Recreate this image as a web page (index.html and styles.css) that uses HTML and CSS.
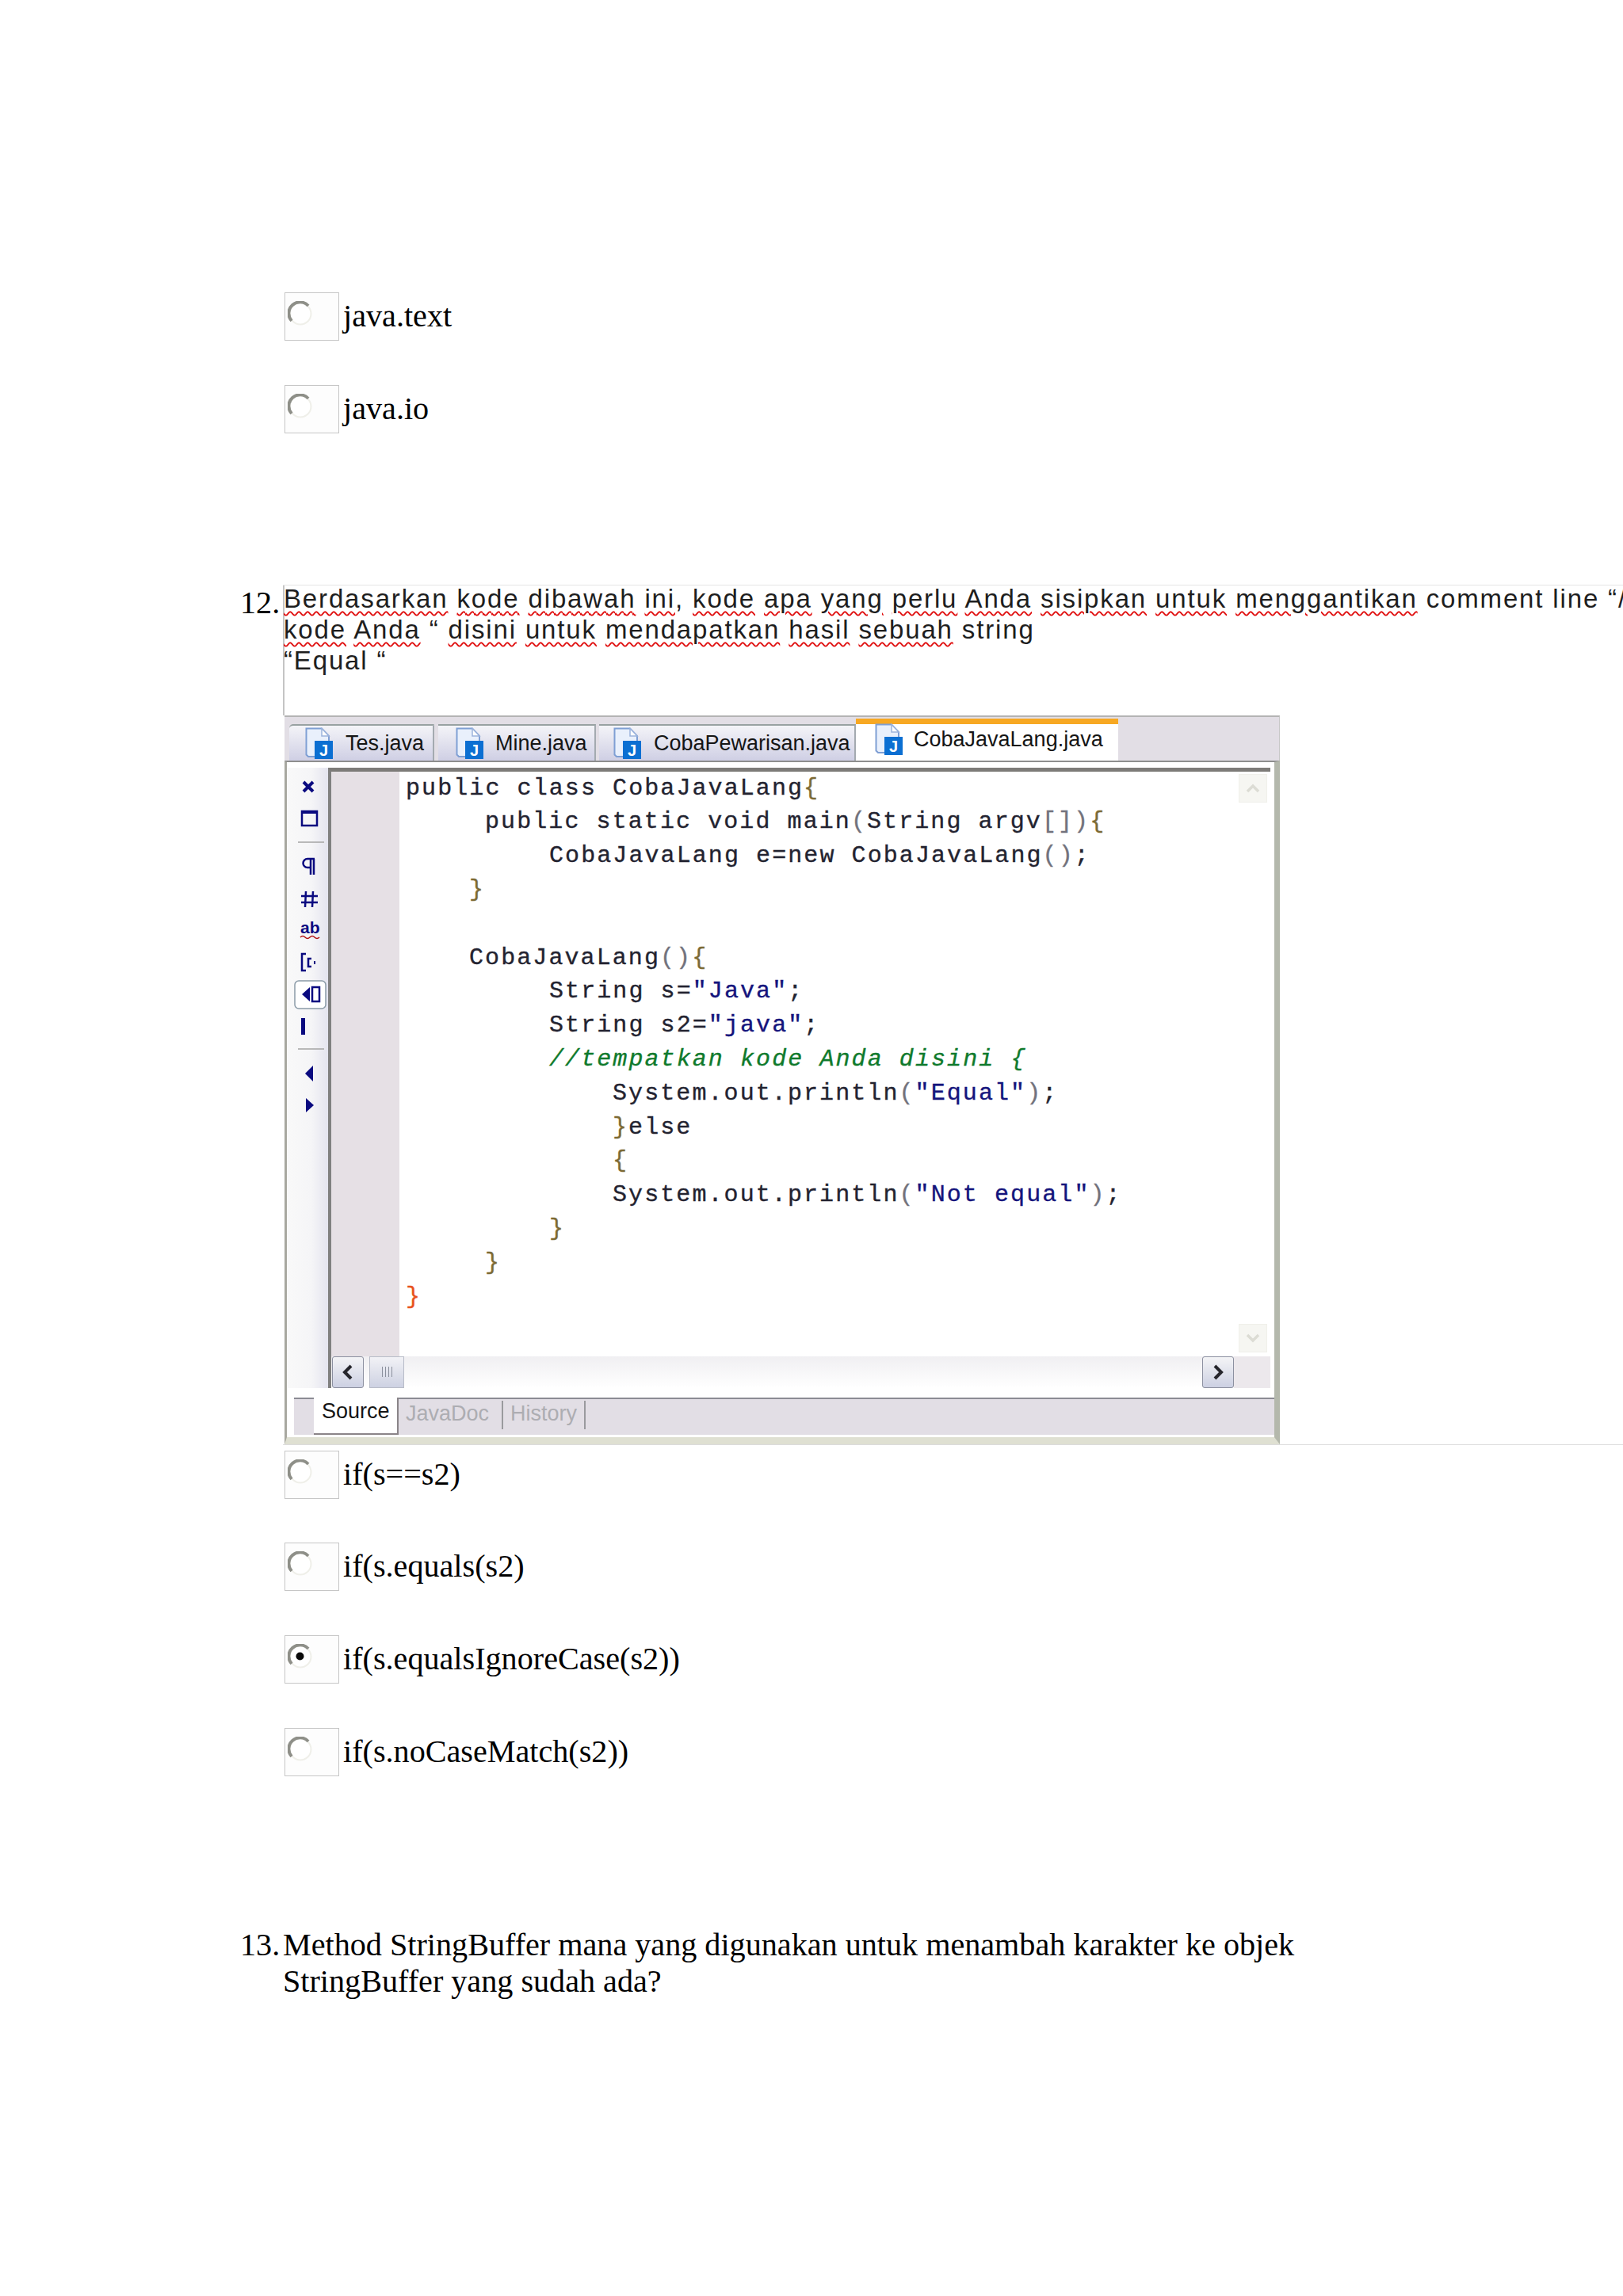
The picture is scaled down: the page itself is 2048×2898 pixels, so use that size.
FILE: index.html
```html
<!DOCTYPE html>
<html lang="id">
<head>
<meta charset="utf-8">
<title>Soal Java</title>
<link rel="stylesheet" href="styles.css">
</head>
<body>
<svg class="defs" width="0" height="0" aria-hidden="true">
  <symbol id="radio" viewBox="0 0 32 32">
    <circle cx="16" cy="16" r="13.5" fill="#fff" stroke="#efefe9" stroke-width="2"/>
    <path d="M5 25 A14 14 0 0 1 26 6" fill="none" stroke="#8e8f88" stroke-width="4"/>
  </symbol>
  <symbol id="radio-on" viewBox="0 0 32 32">
    <circle cx="16" cy="16" r="13.5" fill="#fff" stroke="#efefe9" stroke-width="2"/>
    <path d="M5 25 A14 14 0 0 1 26 6" fill="none" stroke="#8e8f88" stroke-width="4"/>
    <circle cx="15.500" cy="15.500" r="5" fill="#0a0a0a"/>
  </symbol>
  <symbol id="jfile" viewBox="0 0 36 40">
    <path d="M1.500 1.500H21L30 11V37H4L1.500 34.500Z" fill="#e9f0fc" stroke="#7f9fd4" stroke-width="2"/>
    <path d="M21 1.500V11H30Z" fill="#fff" stroke="#9db4dc" stroke-width="1.500"/>
    <rect x="12" y="17" width="23" height="23" fill="#0b6fd2"/>
  </symbol>
</svg>

<main class="page">
  <ul class="options options-top">
    <li class="option"><span class="radio-box"><svg class="radio"><use href="#radio"/></svg></span><span>java.text</span></li>
    <li class="option"><span class="radio-box"><svg class="radio"><use href="#radio"/></svg></span><span>java.io</span></li>
  </ul>

  <section class="question q12">
    <div class="qnum">12.</div>
    <div class="qbody">
      <div class="shot">
        <div class="shot-text">
          <div class="shot-line"><span class="sp">Berdasarkan</span> <span class="sp">kode</span> <span class="sp">dibawah</span> <span class="sp">ini</span>, <span class="sp">kode</span> <span class="sp">apa</span> <span class="sp">yang</span> <span class="sp">perlu</span> <span class="sp">Anda</span> <span class="sp">sisipkan</span> <span class="sp">untuk</span> <span class="sp">menggantikan</span> comment line “/</div>
          <div class="shot-line"><span class="sp">kode</span> <span class="sp">Anda</span> “ <span class="sp">disini</span> <span class="sp">untuk</span> <span class="sp">mendapatkan</span> <span class="sp">hasil</span> <span class="sp">sebuah</span> string</div>
          <div class="shot-line">“Equal “</div>
        </div>

        <div class="ide">
          <div class="ide-tabs">
            <div class="tab tab-1"><svg class="jicon" viewBox="0 0 36 40"><use href="#jfile"/><text class="jglyph" x="23.500" y="35.500" text-anchor="middle">J</text></svg>Tes.java</div>
            <div class="tab tab-2"><svg class="jicon" viewBox="0 0 36 40"><use href="#jfile"/><text class="jglyph" x="23.500" y="35.500" text-anchor="middle">J</text></svg>Mine.java</div>
            <div class="tab tab-3"><svg class="jicon" viewBox="0 0 36 40"><use href="#jfile"/><text class="jglyph" x="23.500" y="35.500" text-anchor="middle">J</text></svg>CobaPewarisan.java</div>
            <div class="tab tab-active"><svg class="jicon" viewBox="0 0 36 40"><use href="#jfile"/><text class="jglyph" x="23.500" y="35.500" text-anchor="middle">J</text></svg>CobaJavaLang.java</div>
          </div>
          <div class="ide-frame">
            <div class="ide-work">
              <div class="toolbar">
                <svg class="toolbar-icons" viewBox="361 969 52 450" width="52" height="450">
                  <path d="M382 987L394 999M394 987L382 999" stroke="#0a0a80" stroke-width="4" fill="none"/>
                  <rect x="380" y="1024" width="19" height="18" fill="none" stroke="#0a0a80" stroke-width="2.500"/>
                  <path d="M380 1025H399" stroke="#0a0a80" stroke-width="4"/>
                  <path d="M375 1063H408" stroke="#a5a5a5" stroke-width="1.500"/>
                  <path d="M387 1084H396M391 1084V1104M395 1084V1104M387 1084A5 5 0 0 0 387 1095H391" stroke="#0a0a80" stroke-width="2.500" fill="none"/>
                  <path d="M385 1125L384 1145M394 1125L393 1145M379 1131H400M379 1139H400" stroke="#0a0a80" stroke-width="2.500" fill="none"/>
                  <text class="tool-ab" x="378" y="1178">ab</text>
                  <path d="M378 1183Q381 1180 384 1183T390 1183T396 1183T402 1183" stroke="#b01010" stroke-width="1.500" fill="none"/>
                  <path d="M385 1204H380V1225H385M392 1210H388V1220H392" stroke="#0a0a80" stroke-width="2.500" fill="none"/>
                  <rect x="395" y="1213" width="2" height="4" fill="#0a0a80"/>
                  <rect x="371" y="1238" width="39" height="35" rx="5" fill="#fff" stroke="#8a9aa6" stroke-width="1.500"/>
                  <path d="M380 1255L390 1246V1264Z" fill="#0a0a80"/>
                  <rect x="393" y="1246" width="9" height="18" fill="#fff" stroke="#0a0a80" stroke-width="2.500"/>
                  <rect x="379" y="1285" width="5" height="21" fill="#0a0a80"/>
                  <path d="M375 1324H408" stroke="#a5a5a5" stroke-width="1.500"/>
                  <path d="M384 1355L394 1345V1365Z" fill="#0a0a80"/>
                  <path d="M395 1395L385 1386V1404Z" fill="#0a0a80"/>
                </svg>
              </div>
              <div class="editor">
                <div class="gutter"></div>
                <div class="code">
                  <div class="ln">public class CobaJavaLang<span class="br">{</span></div>
                  <div class="ln i5">public static void main<span class="pn">(</span>String argv<span class="pn">[])</span><span class="br">{</span></div>
                  <div class="ln i9">CobaJavaLang e=new CobaJavaLang<span class="pn">()</span>;</div>
                  <div class="ln i4"><span class="br">}</span></div>
                  <div class="ln ln-blank"></div>
                  <div class="ln i4">CobaJavaLang<span class="pn">()</span><span class="br">{</span></div>
                  <div class="ln i9">String s=<span class="st">"Java"</span>;</div>
                  <div class="ln i9">String s2=<span class="st">"java"</span>;</div>
                  <div class="ln i9"><span class="cm">//tempatkan kode Anda disini {</span></div>
                  <div class="ln i13">System.out.println<span class="pn">(</span><span class="st">"Equal"</span><span class="pn">)</span>;</div>
                  <div class="ln i13"><span class="br">}</span>else</div>
                  <div class="ln i13"><span class="br">{</span></div>
                  <div class="ln i13">System.out.println<span class="pn">(</span><span class="st">"Not equal"</span><span class="pn">)</span>;</div>
                  <div class="ln i9"><span class="br">}</span></div>
                  <div class="ln i5"><span class="br">}</span></div>
                  <div class="ln"><span class="end">}</span></div>
                </div>
                <div class="vscroll">
                  <div class="vbtn"><svg class="vchev" viewBox="0 0 20 12"><path d="M3 10L10 3L17 10" fill="none" stroke="#dcdcd4" stroke-width="3.500"/></svg></div>
                  <div class="vbtn"><svg class="vchev" viewBox="0 0 20 12"><path d="M3 2L10 9L17 2" fill="none" stroke="#dcdcd4" stroke-width="3.500"/></svg></div>
                </div>
                <div class="hscroll">
                  <div class="hbtn hbtn-left"><svg class="hchev" viewBox="0 0 16 20"><path d="M12 2L4 10L12 18" fill="none" stroke="#26262c" stroke-width="4"/></svg></div>
                  <div class="hthumb"><span class="grip"></span><span class="grip"></span><span class="grip"></span><span class="grip"></span></div>
                  <div class="htrack"></div>
                  <div class="hbtn"><svg class="hchev" viewBox="0 0 16 20"><path d="M4 2L12 10L4 18" fill="none" stroke="#26262c" stroke-width="4"/></svg></div>
                  <div class="hcorner"></div>
                </div>
              </div>
            </div>
            <div class="ide-views">
              <div class="view view-on">Source</div>
              <div class="view view-off view-javadoc">JavaDoc</div>
              <div class="view view-off view-history">History</div>
            </div>
          </div>
        </div>
      </div>

      <ul class="options options-q">
        <li class="option"><span class="radio-box"><svg class="radio"><use href="#radio"/></svg></span><span>if(s==s2)</span></li>
        <li class="option"><span class="radio-box"><svg class="radio"><use href="#radio"/></svg></span><span>if(s.equals(s2)</span></li>
        <li class="option"><span class="radio-box"><svg class="radio"><use href="#radio-on"/></svg></span><span>if(s.equalsIgnoreCase(s2))</span></li>
        <li class="option"><span class="radio-box"><svg class="radio"><use href="#radio"/></svg></span><span>if(s.noCaseMatch(s2))</span></li>
      </ul>
    </div>
  </section>

  <section class="question q13">
    <div class="qnum">13.</div>
    <div class="qbody">
      <p class="qtext">Method StringBuffer mana yang digunakan untuk menambah karakter ke objek<br>StringBuffer yang sudah ada?</p>
    </div>
  </section>
</main>
</body>
</html>
```

FILE: styles.css
```css
html, body {
  margin: 0;
  padding: 0;
  background: #fff;
}
body {
  height: 2898px;
  overflow: hidden;
  color: #000;
  font-family: "Liberation Serif", "Times New Roman", serif;
  font-size: 40.16px;
  line-height: 46px;
}
.defs { position: absolute; }
.jglyph {
  font: bold 20px "Liberation Sans", Arial, sans-serif;
  fill: #fff;
}
.page {
  padding: 369px 0 0 303px;
  width: 1745px;
}

/* options */
.options {
  list-style: none;
  margin: 0;
  padding: 0;
  display: flex;
  flex-direction: column;
  gap: 55.7px;
}
.options-top { margin-left: 56px; }
.options-q { margin: 7px 0 0 2px; }
.option {
  display: flex;
  gap: 5px;
  height: 61px;
  white-space: nowrap;
}
.option > span:last-child { margin-top: 7px; }
.radio-box {
  box-sizing: border-box;
  flex: none;
  width: 69px;
  height: 61px;
  padding: 10px 0 0 3px;
  background: #fdfdfd;
  border: 1px solid #c6c6c6;
}
.radio {
  display: block;
  width: 32px;
  height: 32px;
}

/* questions */
.question { display: flex; }
.qnum {
  flex: none;
  width: 54px;
}
.qbody {
  flex: 1;
  min-width: 0;
  overflow: hidden;
}
.q12 { margin-top: 191px; }
.q13 { margin-top: 190px; }
.qtext { margin: 0; }

/* picture of the question */
.shot {
  border-top: 1px solid #e6e6e6;
  border-bottom: 1px solid #dcdcdc;
}
.shot-text {
  box-sizing: border-box;
  height: 164px;
  border-left: 2px solid #c4c4c4;
  color: #1e1e1e;
  font: 33px/39px "Liberation Sans", Arial, sans-serif;
  letter-spacing: 1.85px;
  white-space: nowrap;
}
.shot-line { margin-left: -1px; }
.shot-line:first-child {
  line-height: 33px;
  margin-bottom: 3px;
}
.sp {
  text-decoration: underline wavy #e01010 2px;
  text-underline-offset: 4px;
}

/* IDE */
.ide {
  box-sizing: border-box;
  width: 1256px;
  height: 920px;
  margin-left: 2px;
  display: flex;
  flex-direction: column;
  color: #151515;
  font-family: "Liberation Sans", Arial, sans-serif;
  font-size: 27px;
}
.ide-tabs {
  box-sizing: border-box;
  flex: none;
  height: 57px;
  display: flex;
  align-items: flex-end;
  padding-left: 6px;
  background: #e2dee5;
  border-top: 2px solid #b4b4b4;
  border-right: 1px solid #c8c8c8;
}
.tab {
  box-sizing: border-box;
  display: flex;
  align-items: center;
  height: 46px;
  border-top: 2px solid #98a2a2;
  border-right: 2px solid #a4aab0;
  background: linear-gradient(#f4f4f8, #cfcfe4);
  line-height: 40px;
  white-space: nowrap;
}
.tab-1 { width: 183px; padding-left: 20px; gap: 15px; margin-right: 5px; border-top-left-radius: 5px; }
.tab-2 { width: 199px; padding-left: 22px; gap: 14px; margin-right: 4px; }
.tab-3 { width: 324px; padding-left: 18px; gap: 15px; }
.tab-active {
  width: 331px;
  height: 55px;
  margin-bottom: -2px;
  padding: 0 0 10px 24px;
  gap: 13px;
  background: #fff;
  border: 0;
  border-top: 7px solid #f7a823;
}
.jicon {
  flex: none;
  width: 36px;
  height: 40px;
}
.ide-frame {
  box-sizing: border-box;
  flex: 1;
  min-height: 0;
  display: flex;
  flex-direction: column;
  padding-top: 7px;
  background: #fff;
  border-top: 2px solid #8e8e8e;
  border-left: 3px solid #a8a8a0;
  border-right: 7px solid #b4b8ac;
  border-bottom: 9px solid #dfe0d2;
}
.ide-work {
  flex: none;
  height: 783px;
  display: flex;
  margin-right: 5px;
}
.toolbar {
  flex: none;
  width: 52px;
  background: linear-gradient(90deg, #f9f9f9, #f5f5f7 60%, #e4e4ef);
}
.toolbar-icons { display: block; }
.tool-ab {
  font: bold 21px "Liberation Sans", Arial, sans-serif;
  fill: #0a0a80;
}
.editor {
  flex: 1;
  min-width: 0;
  display: grid;
  grid-template-columns: 86px 1fr 43px;
  grid-template-rows: minmax(0, 1fr) 40px;
  border-top: 5px solid #7d7b78;
  border-left: 4px solid #808080;
}
.gutter { background: #e6e0e5; }
.code {
  padding-left: 8px;
  overflow: hidden;
  background: #fff;
  color: #232330;
  font: 30px/42.8px "Liberation Mono", "Courier New", monospace;
  letter-spacing: 2.08px;
  -webkit-text-stroke: 0.35px currentColor;
}
.ln { white-space: pre; }
.ln-blank { height: 42.8px; }
.i4 { padding-left: 80px; }
.i5 { padding-left: 100px; }
.i9 { padding-left: 181px; }
.i13 { padding-left: 261px; }
.br { color: #7c6a34; }
.pn { color: #72727c; }
.st { color: #14147c; }
.cm { color: #0f7a2c; font-style: italic; }
.end { color: #e8521c; }
.vscroll {
  display: flex;
  flex-direction: column;
  justify-content: space-between;
  padding: 3px 4px 5px 0;
  background: #fff;
}
.vbtn {
  box-sizing: border-box;
  height: 36px;
  margin-left: 3px;
  display: flex;
  align-items: center;
  justify-content: center;
  background: #f6f6f2;
  border: 1px solid #f0f0ea;
}
.vchev { width: 20px; height: 12px; }
.hscroll {
  grid-column: 1 / -1;
  display: flex;
  background: linear-gradient(#f0eff2, #fff);
}
.hbtn {
  box-sizing: border-box;
  flex: none;
  width: 40px;
  display: flex;
  align-items: center;
  justify-content: center;
  background: linear-gradient(#f4f4f6, #ccd0e2);
  border: 1px solid #8c90a0;
  border-radius: 3px;
}
.hbtn-left { margin-left: 1px; }
.hchev { width: 16px; height: 20px; }
.hthumb {
  box-sizing: border-box;
  flex: none;
  width: 44px;
  margin-left: 7px;
  display: flex;
  align-items: center;
  justify-content: center;
  gap: 3px;
  background: linear-gradient(#f2f2f6, #cdd1e2);
  border: 1px solid #b8bcc8;
}
.grip {
  width: 1px;
  height: 13px;
  background: #8a8f9c;
}
.htrack { flex: 1; }
.hcorner {
  flex: none;
  width: 46px;
  background: #ece8ec;
}
.ide-views {
  box-sizing: border-box;
  flex: none;
  height: 47px;
  margin: 12px 0 2px 9px;
  padding-left: 25px;
  display: flex;
  background: #e2dee5;
  border-top: 2px solid #8b8b94;
}
.view { white-space: nowrap; }
.view-on {
  box-sizing: border-box;
  width: 107px;
  height: 47px;
  margin-top: -2px;
  padding-left: 10px;
  line-height: 34px;
  background: #fff;
  border-right: 2px solid #8a8488;
  border-bottom: 2px solid #8a8488;
}
.view-off {
  box-sizing: border-box;
  height: 36px;
  margin-top: 2px;
  line-height: 32px;
  color: #adadb2;
  border-right: 2px solid #9a9a9e;
}
.view-javadoc { width: 132px; padding-left: 9px; }
.view-history { width: 104px; padding-left: 9px; }
```
